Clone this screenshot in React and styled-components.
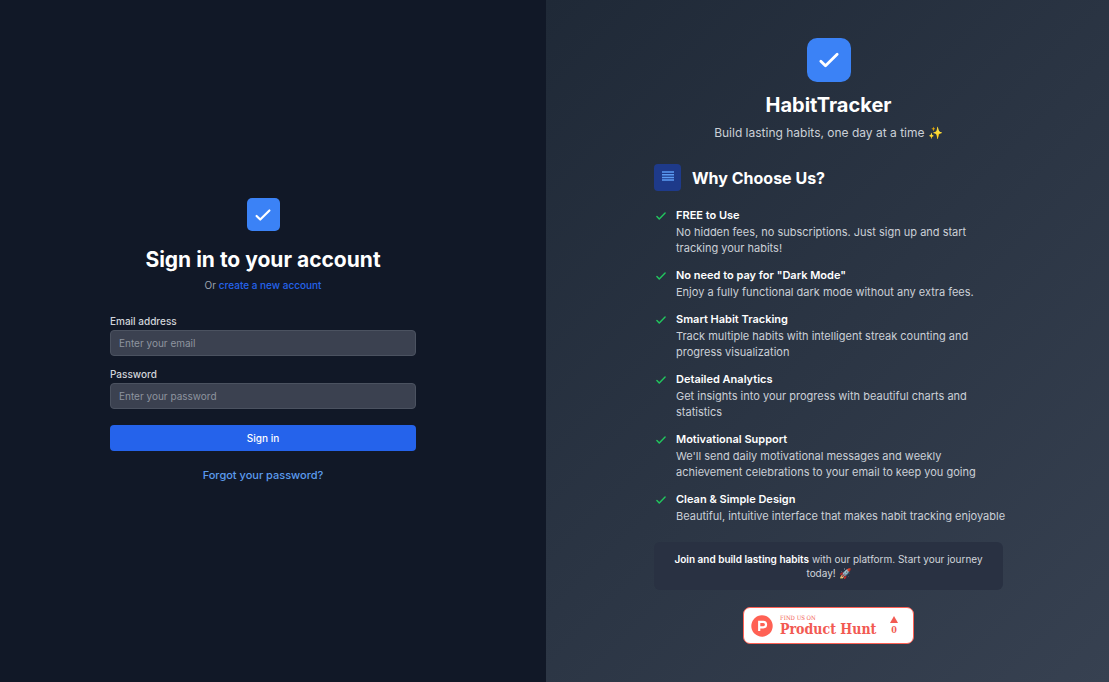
import React from "react";
import styled, { createGlobalStyle } from "styled-components";

const GlobalStyle = createGlobalStyle`
  *, *::before, *::after { box-sizing: border-box; }
  body {
    margin: 0;
    background: #111827;
    font-family: Inter, "Liberation Sans", sans-serif;
    -webkit-font-smoothing: antialiased;
  }
  h1, h2, h3, p, ul { margin: 0; padding: 0; }
  a { text-decoration: none; }
`;

const Page = styled.div`
  display: grid;
  grid-template-columns: minmax(0, 546fr) minmax(0, 563fr);
  min-height: 100vh;
`;

const SignInPanel = styled.main`
  display: flex;
  align-items: center;
  justify-content: center;
  padding: 16px 36px 16px 16px;
  background: #111827;
`;

const SignInContent = styled.div`
  width: 100%;
  max-width: 306px;
  display: flex;
  flex-direction: column;
  align-items: center;
`;

const LogoTile = styled.div`
  width: ${({ $size }) => $size}px;
  height: ${({ $size }) => $size}px;
  border-radius: ${({ $radius }) => $radius}px;
  background: #3b82f6;
  color: #fff;
  display: flex;
  align-items: center;
  justify-content: center;
`;

const SignInTitle = styled.h1`
  margin-top: 16px;
  font-size: 21px;
  line-height: 26px;
  font-weight: 700;
  color: #fff;
  text-align: center;
`;

const SignInHint = styled.p`
  margin-top: 5px;
  font-size: 10px;
  line-height: 14px;
  color: #9ca3af;
  a { color: #2563eb; font-weight: 500; }
`;

const Form = styled.form`
  width: 100%;
  margin-top: 22px;
  display: flex;
  flex-direction: column;
  gap: 11px;
`;

const Field = styled.div`
  display: flex;
  flex-direction: column;
  gap: 2px;
`;

const Label = styled.label`
  font-size: 10px;
  line-height: 14px;
  font-weight: 500;
  color: #d1d5db;
`;

const Input = styled.input`
  width: 100%;
  height: 26px;
  padding: 0 8px;
  border: 1px solid #4b5260;
  border-radius: 4px;
  background: #3b4150;
  color: #fff;
  font: 400 10px/14px Inter, "Liberation Sans", sans-serif;
  &::placeholder { color: #8e949f; opacity: 1; }
`;

const SubmitButton = styled.button`
  width: 100%;
  height: 26px;
  margin-top: 5px;
  border: 0;
  border-radius: 4px;
  background: #2563eb;
  color: #fff;
  font: 500 10px/14px Inter, "Liberation Sans", sans-serif;
  cursor: pointer;
`;

const ForgotLink = styled.a`
  margin-top: 16px;
  font-size: 11px;
  line-height: 17px;
  font-weight: 500;
  color: #5c9bee;
`;

const PromoPanel = styled.aside`
  display: flex;
  align-items: center;
  justify-content: center;
  padding: 16px 16px 16px 18px;
  background: linear-gradient(135deg, #1f2937, #374151);
`;

const PromoContent = styled.div`
  width: 100%;
  max-width: 349px;
  display: flex;
  flex-direction: column;
  align-items: center;
`;

const PromoTitle = styled.h2`
  margin-top: 10px;
  font-size: 20px;
  line-height: 26px;
  font-weight: 700;
  color: #fff;
`;

const Tagline = styled.p`
  margin-top: 6px;
  font-size: 12px;
  line-height: 18px;
  color: #cbd0d7;
`;

const SectionHeading = styled.div`
  align-self: stretch;
  margin-top: 22px;
  display: flex;
  align-items: center;
  gap: 11px;
`;

const SectionIcon = styled.div`
  width: 27px;
  height: 27px;
  border-radius: 4px;
  background: #1e3a8a;
  color: #5b9bf3;
  display: flex;
  align-items: flex-start;
  justify-content: center;
  padding-top: 5px;
`;

const SectionTitle = styled.h3`
  font-size: 16px;
  line-height: 22px;
  font-weight: 700;
  color: #fff;
`;

const FeatureList = styled.ul`
  align-self: stretch;
  margin: 16px -4px 0 0;
  list-style: none;
  display: flex;
  flex-direction: column;
  gap: 11px;
`;

const Feature = styled.li`
  display: flex;
  gap: 8px;
  > svg { flex: none; margin-top: 2px; }
`;

const FeatureTitle = styled.p`
  font-size: 11px;
  line-height: 17px;
  font-weight: 600;
  color: #fff;
`;

const FeatureText = styled.p`
  font-size: 11px;
  line-height: 16px;
  color: #cbd0d7;
`;

const Callout = styled.div`
  align-self: stretch;
  margin-top: 18px;
  padding: 10px 16px;
  border-radius: 6px;
  background: #293142;
  font-size: 10px;
  line-height: 14px;
  text-align: center;
  color: #d1d5db;
  strong { font-weight: 600; color: #fff; }
`;

const HuntBadge = styled.a`
  margin-top: 17px;
  width: 171px;
  height: 37px;
  padding: 0 15px 0 7px;
  display: flex;
  align-items: center;
  border: 1px solid #ff6154;
  border-radius: 7px;
  background: #fff;
  color: #f25a52;
  font-family: "DejaVu Serif Condensed", "DejaVu Serif", serif;
  font-weight: 700;
`;

const HuntText = styled.span`
  flex: 1;
  margin-left: 7px;
  display: flex;
  flex-direction: column;
  white-space: nowrap;
`;

const HuntSmall = styled.span`
  font-size: 6px;
  line-height: 7px;
  font-weight: 400;
`;

const HuntName = styled.span`
  font-size: 14px;
  line-height: 16px;
`;

const HuntVotes = styled.span`
  display: flex;
  flex-direction: column;
  align-items: center;
  gap: 2px;
  font-size: 9px;
  line-height: 10px;
`;

const Check = ({ size, stroke = 2, color = "currentColor" }) => (
  <svg width={size} height={size} viewBox="0 0 24 24" fill="none" stroke={color}
    strokeWidth={stroke} strokeLinecap="round" strokeLinejoin="round" aria-hidden="true">
    <path d="M5 13l4 4L19 7" />
  </svg>
);

const features = [
  ["FREE to Use", "No hidden fees, no subscriptions. Just sign up and start tracking your habits!"],
  ["No need to pay for \"Dark Mode\"", "Enjoy a fully functional dark mode without any extra fees."],
  ["Smart Habit Tracking", "Track multiple habits with intelligent streak counting and progress visualization"],
  ["Detailed Analytics", "Get insights into your progress with beautiful charts and statistics"],
  ["Motivational Support", "We'll send daily motivational messages and weekly achievement celebrations to your email to keep you going"],
  ["Clean & Simple Design", "Beautiful, intuitive interface that makes habit tracking enjoyable"],
];

export default function App() {
  return (
    <>
      <GlobalStyle />
      <Page>
        <SignInPanel>
          <SignInContent>
            <LogoTile $size={33} $radius={5}><Check size={22} stroke={2.4} /></LogoTile>
            <SignInTitle>Sign in to your account</SignInTitle>
            <SignInHint>Or <a href="#register">create a new account</a></SignInHint>
            <Form onSubmit={(e) => e.preventDefault()}>
              <Field>
                <Label htmlFor="email">Email address</Label>
                <Input id="email" type="email" placeholder="Enter your email" />
              </Field>
              <Field>
                <Label htmlFor="password">Password</Label>
                <Input id="password" type="password" placeholder="Enter your password" />
              </Field>
              <SubmitButton type="submit">Sign in</SubmitButton>
            </Form>
            <ForgotLink href="#forgot">Forgot your password?</ForgotLink>
          </SignInContent>
        </SignInPanel>
        <PromoPanel>
          <PromoContent>
            <LogoTile $size={44} $radius={10}><Check size={28} stroke={2.4} /></LogoTile>
            <PromoTitle>HabitTracker</PromoTitle>
            <Tagline>Build lasting habits, one day at a time ✨</Tagline>
            <SectionHeading>
              <SectionIcon>
                <svg width="14" height="14" viewBox="0 0 14 14" stroke="currentColor" strokeWidth="1.5" aria-hidden="true">
                  <path d="M1 3h12M1 5.7h12M1 8.4h12M1 11.1h12" />
                </svg>
              </SectionIcon>
              <SectionTitle>Why Choose Us?</SectionTitle>
            </SectionHeading>
            <FeatureList>
              {features.map(([title, text]) => (
                <Feature key={title}>
                  <Check size={14} stroke={2.5} color="#22c55e" />
                  <div>
                    <FeatureTitle>{title}</FeatureTitle>
                    <FeatureText>{text}</FeatureText>
                  </div>
                </Feature>
              ))}
            </FeatureList>
            <Callout>
              <strong>Join and build lasting habits</strong> with our platform. Start your journey today! 🚀
            </Callout>
            <HuntBadge href="#product-hunt">
              <svg width="22" height="22" viewBox="0 0 22 22" aria-hidden="true">
                <circle cx="11" cy="11" r="10.7" fill="#ff6154" />
                <path d="M8.2 16V6.8h4.1a2.75 2.75 0 0 1 0 5.5H8.2" fill="none" stroke="#fff" strokeWidth="2.2" />
              </svg>
              <HuntText>
                <HuntSmall>FIND US ON</HuntSmall>
                <HuntName>Product Hunt</HuntName>
              </HuntText>
              <HuntVotes>
                <svg width="8" height="7" viewBox="0 0 8 7" fill="currentColor" aria-hidden="true"><path d="M4 0l4 7H0z" /></svg>
                0
              </HuntVotes>
            </HuntBadge>
          </PromoContent>
        </PromoPanel>
      </Page>
    </>
  );
}
